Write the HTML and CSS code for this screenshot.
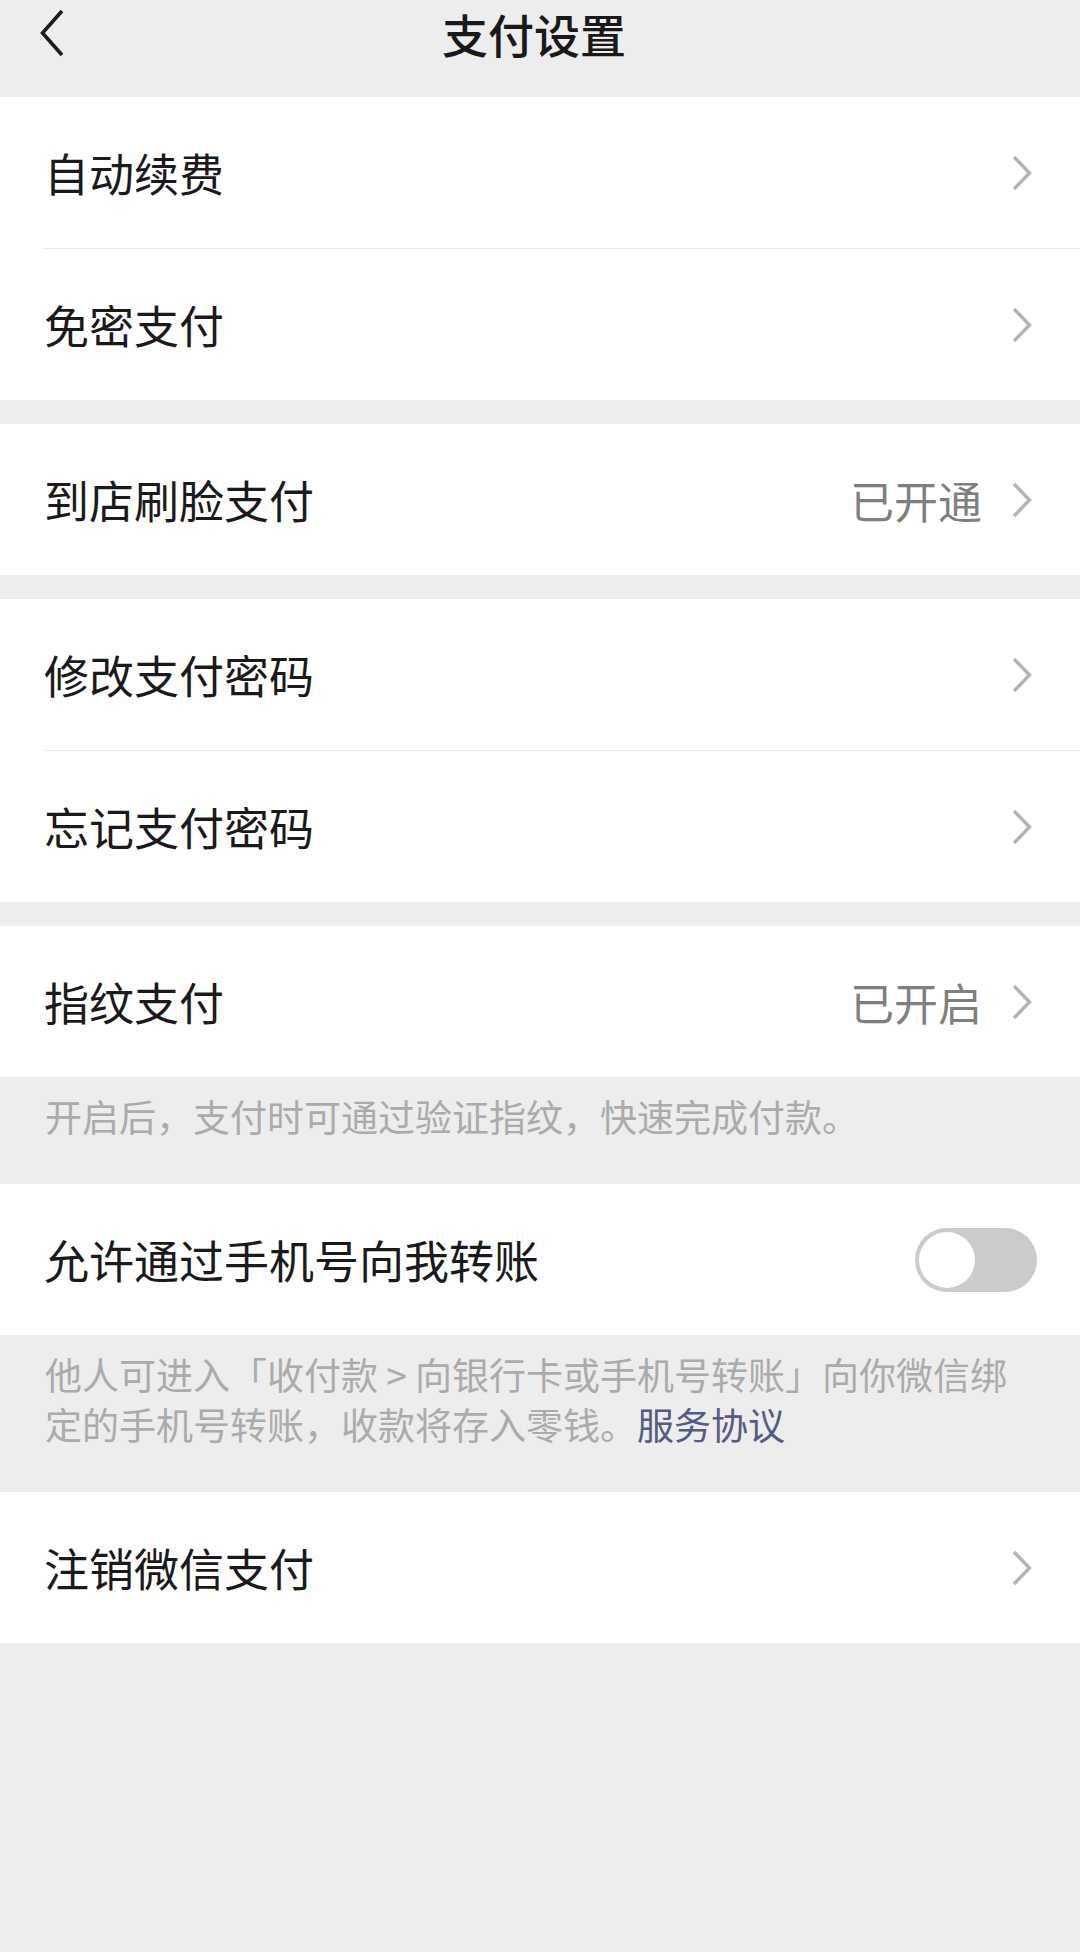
FILE: index.html
```html
<!DOCTYPE html>
<html lang="zh-CN">
<head>
    <meta charset="UTF-8">
    <meta name="viewport" content="width=device-width, initial-scale=1.0">
    <title>支付设置</title>
    <link rel="stylesheet" href="styles.css">
</head>
<body>

    <!-- Barre du haut -->
    <header class="nav-bar">
        <div class="nav-back">
            <svg width="26" height="48" viewBox="0 0 26 48"><path d="M23 2 L3.5 24 L23 46" fill="none" stroke="#1c1c1c" stroke-width="3.6"/></svg>
        </div>
        <h1 class="nav-title">支付设置</h1>
        <div></div>
    </header>

    <div class="cell-group">
        <div class="cell">
            <div class="cell-body">
                <span class="cell-label">自动续费</span>
                <span class="chevron"><svg width="20" height="36" viewBox="0 0 20 36"><path d="M2 2 L17.5 18 L2 34" fill="none" stroke="#b4b4b4" stroke-width="3.4"/></svg></span>
            </div>
        </div>
        <div class="cell">
            <div class="cell-body">
                <span class="cell-label">免密支付</span>
                <span class="chevron"><svg width="20" height="36" viewBox="0 0 20 36"><path d="M2 2 L17.5 18 L2 34" fill="none" stroke="#b4b4b4" stroke-width="3.4"/></svg></span>
            </div>
        </div>
    </div>

    <div class="cell-group">
        <div class="cell">
            <div class="cell-body">
                <span class="cell-label">到店刷脸支付</span>
                <span class="cell-value">已开通</span>
                <span class="chevron"><svg width="20" height="36" viewBox="0 0 20 36"><path d="M2 2 L17.5 18 L2 34" fill="none" stroke="#b4b4b4" stroke-width="3.4"/></svg></span>
            </div>
        </div>
    </div>

    <div class="cell-group">
        <div class="cell">
            <div class="cell-body">
                <span class="cell-label">修改支付密码</span>
                <span class="chevron"><svg width="20" height="36" viewBox="0 0 20 36"><path d="M2 2 L17.5 18 L2 34" fill="none" stroke="#b4b4b4" stroke-width="3.4"/></svg></span>
            </div>
        </div>
        <div class="cell">
            <div class="cell-body">
                <span class="cell-label">忘记支付密码</span>
                <span class="chevron"><svg width="20" height="36" viewBox="0 0 20 36"><path d="M2 2 L17.5 18 L2 34" fill="none" stroke="#b4b4b4" stroke-width="3.4"/></svg></span>
            </div>
        </div>
    </div>

    <div class="cell-group no-gap">
        <div class="cell">
            <div class="cell-body">
                <span class="cell-label">指纹支付</span>
                <span class="cell-value">已开启</span>
                <span class="chevron"><svg width="20" height="36" viewBox="0 0 20 36"><path d="M2 2 L17.5 18 L2 34" fill="none" stroke="#b4b4b4" stroke-width="3.4"/></svg></span>
            </div>
        </div>
    </div>
    <p class="cell-tip">开启后，支付时可通过验证指纹，快速完成付款。</p>

    <div class="cell-group no-gap">
        <div class="cell">
            <div class="cell-body toggle-body">
                <span class="cell-label">允许通过手机号向我转账</span>
                <span class="switch"><span class="switch-knob"></span></span>
            </div>
        </div>
    </div>
    <p class="cell-tip">他人可进入「收付款 &gt; 向银行卡或手机号转账」向你微信绑定的手机号转账，收款将存入零钱。<a class="tip-link" href="#">服务协议</a></p>

    <div class="cell-group no-gap">
        <div class="cell">
            <div class="cell-body">
                <span class="cell-label">注销微信支付</span>
                <span class="chevron"><svg width="20" height="36" viewBox="0 0 20 36"><path d="M2 2 L17.5 18 L2 34" fill="none" stroke="#b4b4b4" stroke-width="3.4"/></svg></span>
            </div>
        </div>
    </div>

</body>
</html>
```

FILE: styles.css
```css
/* Page de base */
body {
    font-family: "Noto Sans CJK SC", "Noto Sans", sans-serif;
    margin: 0;
    padding: 0;
    background-color: #ededed;
    color: #1a1a1a;
}

/* Barre du haut */
.nav-bar {
    display: grid;
    grid-template-columns: 140px 1fr 152px;
    height: 97px;
    background-color: #ededed;
}

.nav-back {
    padding-left: 39px;
    padding-top: 9px;
}

.nav-back svg {
    display: block;
}

.nav-title {
    margin: 0;
    text-align: center;
    font-size: 46px;
    font-weight: 500;
    line-height: 66px;
    color: #191919;
}

/* Groupes de cellules */
.cell-group {
    background-color: #ffffff;
    margin-bottom: 24px;
}

.cell-group.no-gap {
    margin-bottom: 0;
}

.cell {
    padding-left: 43px;
}

.cell-body {
    display: flex;
    align-items: center;
    height: 151px;
    padding-right: 48px;
}

.cell + .cell .cell-body {
    border-top: 1px solid #e9e9e9;
}

.cell-label {
    flex: 1;
    font-size: 45px;
    line-height: 1;
    padding-left: 1px;
}

.cell-value {
    font-size: 44px;
    line-height: 1;
    color: #7f7f7f;
    margin-right: 30px;
}

.chevron svg {
    display: block;
}

/* Interrupteur */
.toggle-body {
    padding-right: 43px;
}

.switch {
    display: flex;
    align-items: center;
    width: 122px;
    height: 64px;
    border-radius: 32px;
    background-color: #cbcbcb;
    padding-left: 4px;
    box-sizing: border-box;
}

.switch-knob {
    width: 56px;
    height: 56px;
    border-radius: 50%;
    background-color: #ffffff;
}

/* Textes d'aide */
.cell-tip {
    margin: 0;
    padding: 14px 45px 43px 45px;
    font-size: 37px;
    line-height: 50px;
    color: #ababab;
}

.tip-link {
    color: #535d80;
    text-decoration: none;
}
```
